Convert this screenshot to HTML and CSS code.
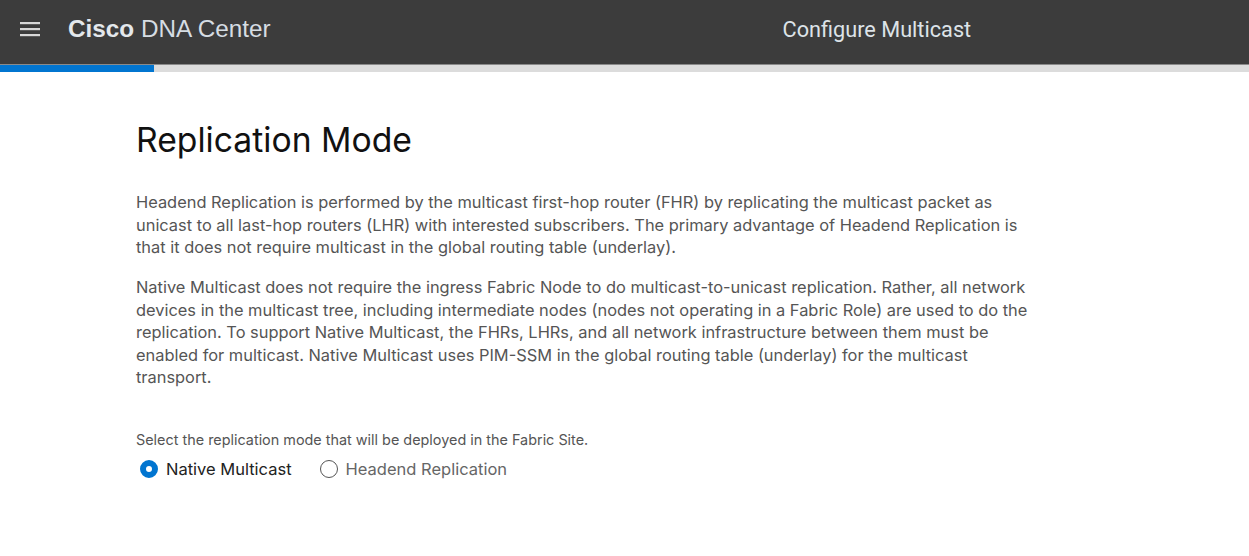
FILE: index.html
```html
<!DOCTYPE html>
<html lang="en">
<head>
  <meta charset="UTF-8" />
  <title>Configure Multicast</title>
  <link rel="stylesheet" href="styles.css">
</head>
<body>
  <header class="topbar">
    <button class="menu-btn" aria-label="Menu">
      <svg width="20" height="16" viewBox="0 0 20 16">
        <rect x="0" y="1" width="20" height="2.2" fill="#d8d8d8"/>
        <rect x="0" y="7" width="20" height="2.2" fill="#d8d8d8"/>
        <rect x="0" y="13" width="20" height="2.2" fill="#d8d8d8"/>
      </svg>
    </button>
    <div class="brand"><b>Cisco</b> DNA Center</div>
    <div class="page-title">Configure Multicast</div>
  </header>
  <div class="progress"><div class="progress-fill" style="width: 154px"></div></div>

  <main class="content">
    <h1>Replication Mode</h1>

    <p>Headend Replication is performed by the multicast first-hop router (FHR) by replicating the multicast packet as<br>
      unicast to all last-hop routers (LHR) with interested subscribers. The primary advantage of Headend Replication is<br>
      that it does not require multicast in the global routing table (underlay).</p>

    <p>Native Multicast does not require the ingress Fabric Node to do multicast-to-unicast replication. Rather, all network<br>
      devices in the multicast tree, including intermediate nodes (nodes not operating in a Fabric Role) are used to do the<br>
      replication. To support Native Multicast, the FHRs, LHRs, and all network infrastructure between them must be<br>
      enabled for multicast. Native Multicast uses PIM-SSM in the global routing table (underlay) for the multicast<br>
      transport.</p>

    <div class="select-label">Select the replication mode that will be deployed in the Fabric Site.</div>
    <div class="radios">
      <label class="radio checked"><span class="dot"></span>Native Multicast</label>
      <label class="radio"><span class="dot"></span>Headend Replication</label>
    </div>
  </main>
</body>
</html>
```

FILE: styles.css
```css
body {
  margin: 0;
  background: #fff;
  font-family: Inter, Roboto, "Liberation Sans", sans-serif;
}

.topbar {
  height: 65px;
  box-sizing: border-box;
  padding-bottom: 6px;
  background: #3c3c3c;
  display: flex;
  align-items: center;
  border-bottom: 1px solid #8a8a8a;
}

.menu-btn {
  background: none;
  border: none;
  padding: 0;
  margin-left: 20px;
  width: 20px;
  height: 16px;
  display: flex;
}

.brand {
  margin-left: 28px;
  font-family: "Liberation Sans", Arial, sans-serif;
  font-size: 24.3px;
  color: #d6dde3;
}

.brand b {
  font-weight: bold;
  color: #e4e8ec;
}

.page-title {
  margin-left: 512px;
  font-family: Roboto, sans-serif;
  font-size: 21.7px;
  color: #dde3e8;
}

.progress {
  height: 7px;
  background: #dcdcdc;
}

.progress-fill {
  height: 100%;
  background: #0175d0;
}

.content {
  padding: 48px 136px 0;
}

h1 {
  margin: 0 0 31px;
  font-size: 33.7px;
  font-weight: 400;
  color: #111;
  line-height: 40px;
}

p {
  margin: 0 0 17.5px;
  font-size: 16.4px;
  line-height: 22.5px;
  color: #555;
  white-space: nowrap;
}

.select-label {
  margin-top: 42px;
  font-size: 14.4px;
  color: #555;
}

.radios {
  display: flex;
  gap: 28px;
  margin-top: 11px;
  margin-left: 4px;
}

.radio {
  display: flex;
  align-items: center;
  gap: 8px;
  font-size: 16.5px;
  color: #666;
}

.radio .dot {
  width: 18px;
  height: 18px;
  border: 1.5px solid #555;
  border-radius: 50%;
  box-sizing: border-box;
}

.radio.checked {
  color: #222;
}

.radio.checked .dot {
  border: 6px solid #0175d0;
}
```
